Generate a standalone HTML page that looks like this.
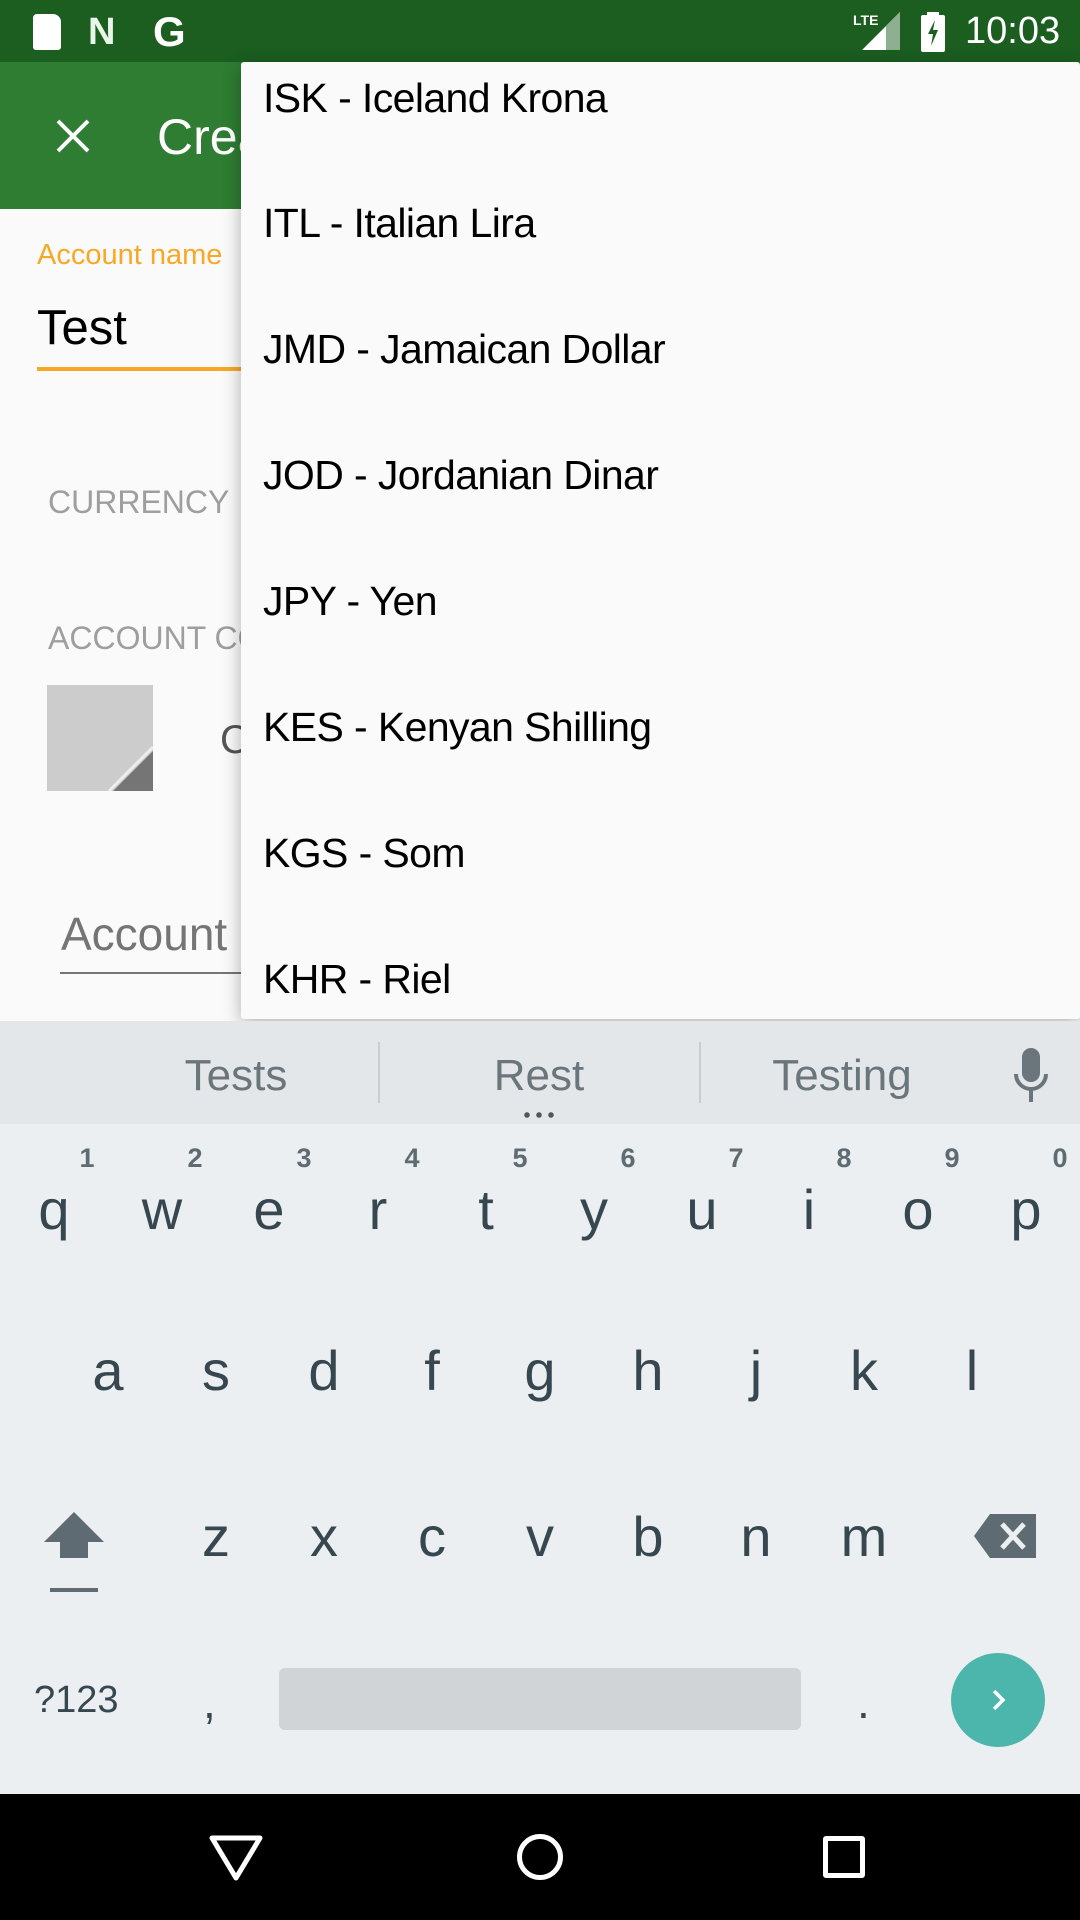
<!DOCTYPE html>
<html><head><meta charset="utf-8"><style>
*{margin:0;padding:0;box-sizing:border-box}
body{width:1080px;height:1920px;position:relative;overflow:hidden;background:#fafafa;font-family:"Liberation Sans",sans-serif}
.a{position:absolute;white-space:nowrap}
.c{position:absolute;height:60px;line-height:60px;white-space:nowrap}
.k{position:absolute;width:100px;text-align:center;font-size:56px;color:#37474f;height:70px;line-height:70px}
.n{position:absolute;width:30px;text-align:center;font-size:27px;color:#5f6b72;font-weight:bold}
.it{position:absolute;left:263px;font-size:41px;letter-spacing:-0.6px;color:#000;height:60px;line-height:60px}
</style></head><body>
<div class="a" style="left:0;top:0;width:1080px;height:62px;background:#1b5e20"></div>
<div class="a" style="left:33px;top:14px;width:28px;height:36px;background:#fff;border-radius:4px 8px 3px 3px"></div>
<div class="c" style="left:88px;top:2px;font-size:38px;font-weight:bold;color:#e8f5e9">N</div>
<div class="c" style="left:153px;top:2px;font-size:42px;font-weight:bold;color:#fff">G</div>
<svg class="a" style="left:850px;top:10px" width="56" height="42"><polygon points="50,2 50,40 12,40" fill="#fff"/><polygon points="50,2 50,40 36,40 36,16" fill="#8fb090"/><text x="3" y="15" font-size="14" font-weight="bold" fill="#fff" font-family="Liberation Sans">LTE</text></svg>
<svg class="a" style="left:921px;top:12px" width="24" height="40"><rect x="6" y="0" width="12" height="4" fill="#fff"/><rect x="0" y="3" width="24" height="37" rx="2" fill="#fff"/><path d="M14 8L7 22H12L10 34L17 18H12Z" fill="#1b5e20"/></svg>
<div class="c" style="left:965px;top:1px;font-size:38px;color:#fff">10:03</div>
<div class="a" style="left:0;top:62px;width:1080px;height:147px;background:#2e7d32"></div>
<svg class="a" style="left:55px;top:118px" width="36" height="36"><path d="M3 3L33 33M33 3L3 33" stroke="#fff" stroke-width="4"/></svg>
<div class="c" style="left:157px;top:107px;font-size:50px;color:#fff">Create</div>
<div class="c" style="left:37px;top:225px;font-size:29px;color:#f9a825">Account name</div>
<div class="c" style="left:37px;top:298px;font-size:49px;color:#000">Test</div>
<div class="a" style="left:37px;top:367px;width:220px;height:4px;background:#f9a825"></div>
<div class="c" style="left:48px;top:472px;font-size:32px;color:#9e9e9e">CURRENCY</div>
<div class="c" style="left:48px;top:608px;font-size:32px;color:#9e9e9e">ACCOUNT COLOR</div>
<svg class="a" style="left:47px;top:685px" width="106" height="106"><rect width="106" height="106" fill="#cccccc"/><polygon points="106,66 106,106 66,106" fill="#757575"/><line x1="62" y1="106" x2="106" y2="62" stroke="#eee" stroke-width="3"/></svg>
<div class="c" style="left:220px;top:710px;font-size:40px;color:#555">Color</div>
<div class="c" style="left:61px;top:904px;font-size:46px;color:#757575">Account</div>
<div class="a" style="left:60px;top:972px;width:200px;height:2px;background:#757575"></div>
<div class="a" style="left:241px;top:62px;width:839px;height:957px;background:#fafafa;border-radius:3px;box-shadow:0 4px 18px rgba(0,0,0,.3)"></div>
<div class="it" style="top:68px">ISK - Iceland Krona</div>
<div class="it" style="top:193px">ITL - Italian Lira</div>
<div class="it" style="top:319px">JMD - Jamaican Dollar</div>
<div class="it" style="top:445px">JOD - Jordanian Dinar</div>
<div class="it" style="top:571px">JPY - Yen</div>
<div class="it" style="top:697px">KES - Kenyan Shilling</div>
<div class="it" style="top:823px">KGS - Som</div>
<div class="it" style="top:949px">KHR - Riel</div>
<div class="a" style="left:0;top:1021px;width:1080px;height:773px;background:#eceff1"></div>
<div class="a" style="left:0;top:1021px;width:1080px;height:103px;background:#e4e7ea"></div>
<div class="c" style="left:136px;top:1046px;width:200px;text-align:center;font-size:44px;color:#6b767c">Tests</div>
<div class="c" style="left:439px;top:1046px;width:200px;text-align:center;font-size:44px;color:#6b767c">Rest</div>
<div class="c" style="left:742px;top:1046px;width:200px;text-align:center;font-size:44px;color:#6b767c">Testing</div>
<div class="a" style="left:378px;top:1042px;width:2px;height:61px;background:#c9cdd0"></div>
<div class="a" style="left:699px;top:1042px;width:2px;height:61px;background:#c9cdd0"></div>
<div class="a" style="left:521px;top:1112px;width:36px;height:6px;background:radial-gradient(circle,#555 2.5px,transparent 3px) 0 0/12px 6px"></div>
<svg class="a" style="left:1012px;top:1048px" width="38" height="56"><rect x="10" y="0" width="18" height="34" rx="9" fill="#6b767c"/><path d="M4 26a15 15 0 0 0 30 0" stroke="#6b767c" stroke-width="4" fill="none"/><rect x="17" y="40" width="4" height="14" fill="#6b767c"/></svg>
<div class="k" style="left:4px;top:1175px">q</div><div class="n" style="left:72px;top:1143px">1</div>
<div class="k" style="left:112px;top:1175px">w</div><div class="n" style="left:180px;top:1143px">2</div>
<div class="k" style="left:219px;top:1175px">e</div><div class="n" style="left:289px;top:1143px">3</div>
<div class="k" style="left:328px;top:1175px">r</div><div class="n" style="left:397px;top:1143px">4</div>
<div class="k" style="left:436px;top:1175px">t</div><div class="n" style="left:505px;top:1143px">5</div>
<div class="k" style="left:544px;top:1175px">y</div><div class="n" style="left:613px;top:1143px">6</div>
<div class="k" style="left:652px;top:1175px">u</div><div class="n" style="left:721px;top:1143px">7</div>
<div class="k" style="left:759px;top:1175px">i</div><div class="n" style="left:829px;top:1143px">8</div>
<div class="k" style="left:868px;top:1175px">o</div><div class="n" style="left:937px;top:1143px">9</div>
<div class="k" style="left:976px;top:1175px">p</div><div class="n" style="left:1045px;top:1143px">0</div>
<div class="k" style="left:58px;top:1336px">a</div>
<div class="k" style="left:166px;top:1336px">s</div>
<div class="k" style="left:274px;top:1336px">d</div>
<div class="k" style="left:382px;top:1336px">f</div>
<div class="k" style="left:490px;top:1336px">g</div>
<div class="k" style="left:598px;top:1336px">h</div>
<div class="k" style="left:706px;top:1336px">j</div>
<div class="k" style="left:814px;top:1336px">k</div>
<div class="k" style="left:922px;top:1336px">l</div>
<svg class="a" style="left:42px;top:1510px" width="64" height="84"><path d="M32 2L2 32H18V48H46V32H62Z" fill="#5f6b72"/><rect x="8" y="78" width="48" height="4" fill="#5f6b72"/></svg>
<div class="k" style="left:166px;top:1502px">z</div>
<div class="k" style="left:274px;top:1502px">x</div>
<div class="k" style="left:382px;top:1502px">c</div>
<div class="k" style="left:490px;top:1502px">v</div>
<div class="k" style="left:598px;top:1502px">b</div>
<div class="k" style="left:706px;top:1502px">n</div>
<div class="k" style="left:814px;top:1502px">m</div>
<svg class="a" style="left:972px;top:1512px" width="66" height="48"><path d="M18 2H64V46H18L2 24Z" fill="#5f6b72"/><path d="M30 12L52 36M52 12L30 36" stroke="#eceff1" stroke-width="5"/></svg>
<div class="c" style="left:34px;top:1670px;font-size:38px;color:#37474f">?123</div>
<div class="c" style="left:203px;top:1672px;font-size:46px;color:#37474f">,</div>
<div class="a" style="left:279px;top:1668px;width:522px;height:62px;background:#d0d4d7;border-radius:6px"></div>
<div class="c" style="left:857px;top:1672px;font-size:46px;color:#37474f">.</div>
<div class="a" style="left:951px;top:1653px;width:94px;height:94px;border-radius:50%;background:#4db6ac"></div>
<svg class="a" style="left:986px;top:1688px" width="24" height="24"><path d="M8 3L17 12L8 21" stroke="#fff" stroke-width="3.5" fill="none"/></svg>
<div class="a" style="left:0;top:1794px;width:1080px;height:126px;background:#000"></div>
<svg class="a" style="left:208px;top:1834px" width="56" height="48"><path d="M4 4H52L28 44Z" stroke="#fff" stroke-width="5" fill="none" stroke-linejoin="round"/></svg>
<div class="a" style="left:517px;top:1834px;width:46px;height:46px;border:5px solid #fff;border-radius:50%"></div>
<div class="a" style="left:823px;top:1836px;width:42px;height:42px;border:5px solid #fff;border-radius:3px"></div>
</body></html>
